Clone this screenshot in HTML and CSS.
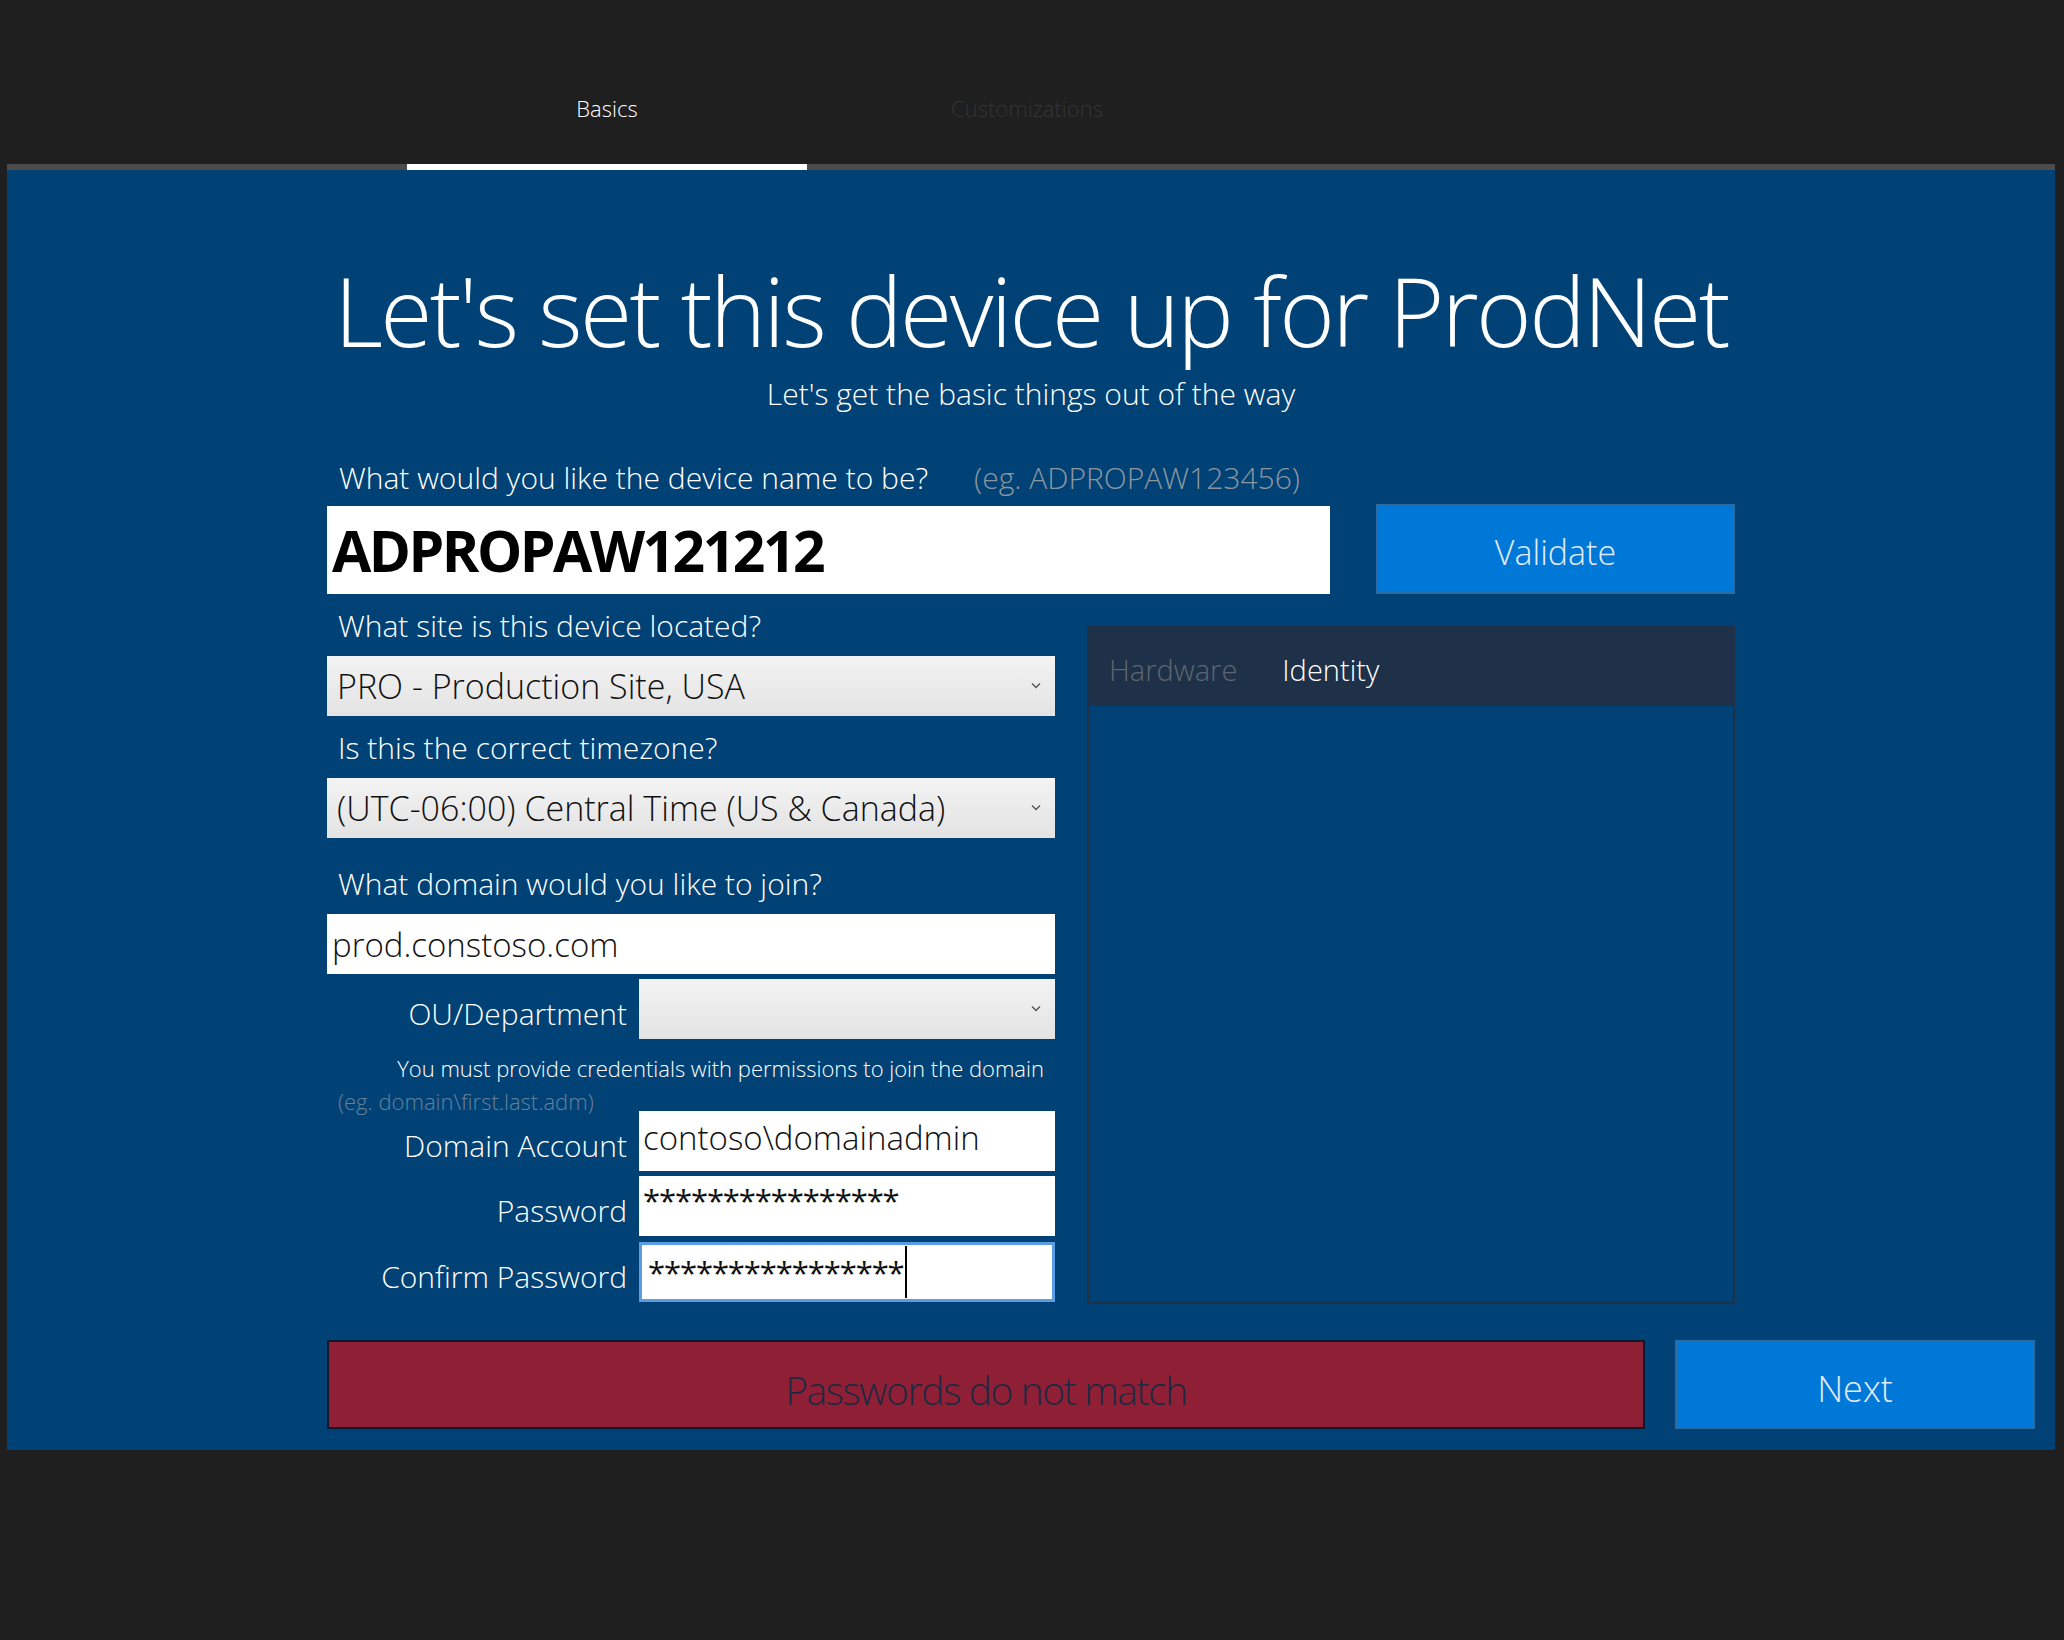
FILE: index.html
```html
<!DOCTYPE html>
<html lang="en">
<head>
    <meta charset="UTF-8">
    <title>Device Setup - ProdNet</title>
    <link rel="stylesheet" href="styles.css">
</head>
<body>

    <div class="tabs">
        <div class="tab active">Basics</div>
        <div class="tab">Customizations</div>
    </div>
    <div class="progress"><div class="progress-fill"></div></div>

    <main class="setup">
        <h1>Let's set this device up for ProdNet</h1>
        <p class="subtitle">Let's get the basic things out of the way</p>

        <div class="form">
            <div class="name-label">What would you like the device name to be?<span class="hint">(eg. ADPROPAW123456)</span></div>
            <div class="name-row">
                <input class="name-input" type="text" value="ADPROPAW121212">
                <button class="btn validate">Validate</button>
            </div>

            <div class="columns">
                <div class="left">
                    <label class="q">What site is this device located?</label>
                    <div class="select">
                        <select><option>PRO - Production Site, USA</option></select>
                        <svg class="chevron" viewBox="0 0 10 7"><path d="M1 1.5 L5 5.5 L9 1.5" fill="none" stroke="#555" stroke-width="1.4"/></svg>
                    </div>

                    <label class="q">Is this the correct timezone?</label>
                    <div class="select">
                        <select><option>(UTC-06:00) Central Time (US &amp; Canada)</option></select>
                        <svg class="chevron" viewBox="0 0 10 7"><path d="M1 1.5 L5 5.5 L9 1.5" fill="none" stroke="#555" stroke-width="1.4"/></svg>
                    </div>

                    <label class="q spaced">What domain would you like to join?</label>
                    <input class="text-box" type="text" value="prod.constoso.com">

                    <div class="row ou">
                        <label>OU/Department</label>
                        <div class="select">
                            <select><option></option></select>
                            <svg class="chevron" viewBox="0 0 10 7"><path d="M1 1.5 L5 5.5 L9 1.5" fill="none" stroke="#555" stroke-width="1.4"/></svg>
                        </div>
                    </div>

                    <p class="note">You must provide credentials with permissions to join the domain</p>
                    <p class="eg">(eg. domain\first.last.adm)</p>

                    <div class="row first">
                        <label>Domain Account</label>
                        <input class="box" type="text" value="contoso\domainadmin">
                    </div>
                    <div class="row">
                        <label>Password</label>
                        <input class="box pw" type="text" value="****************">
                    </div>
                    <div class="row confirm">
                        <label>Confirm Password</label>
                        <div class="box focused"><span class="pw">****************</span><span class="caret"></span></div>
                    </div>
                </div>

                <div class="panel">
                    <div class="panel-tabs">
                        <span class="ptab">Hardware</span>
                        <span class="ptab active">Identity</span>
                    </div>
                    <div class="panel-body"></div>
                </div>
            </div>
        </div>

        <div class="footer">
            <div class="error">Passwords do not match</div>
            <button class="btn next">Next</button>
        </div>
    </main>

</body>
</html>
```

FILE: styles.css
```css
body {
    margin: 0;
    background-color: #1f1f1f;
    color: white;
    font-family: "Open Sans", "Noto Sans", sans-serif;
}

.tabs {
    display: flex;
    height: 164px;
    padding-left: 407px;
    box-sizing: border-box;
}

.tab {
    width: 400px;
    padding-top: 92px;
    text-align: center;
    font-size: 22px;
    line-height: 32px;
    font-weight: 300;
    color: #343434;
}

.tab + .tab {
    width: 440px;
}

.tab.active {
    color: white;
}

.progress {
    height: 6px;
    margin: 0 9px 0 7px;
    background-color: #4c4c4c;
}

.progress-fill {
    width: 400px;
    height: 100%;
    margin-left: 400px;
    background-color: white;
}

.setup {
    height: 1280px;
    margin: 0 9px 0 7px;
    padding-top: 82px;
    box-sizing: border-box;
    background-color: #004275;
}

h1 {
    margin: 0;
    text-align: center;
    font-size: 95px;
    line-height: 116px;
    font-weight: 300;
    letter-spacing: -2.6px;
}

.subtitle {
    margin: 8px 0 0;
    text-align: center;
    font-size: 30px;
    line-height: 36px;
    font-weight: 300;
}

.form {
    width: 1408px;
    margin: 48px 0 0 320px;
}

.name-label {
    padding-left: 12px;
    font-size: 30px;
    line-height: 36px;
    font-weight: 300;
}

.hint {
    margin-left: 46px;
    color: #8c96a0;
}

.name-row {
    display: flex;
    align-items: flex-end;
    justify-content: space-between;
    margin-top: 8px;
}

.name-input {
    width: 1003px;
    height: 88px;
    padding: 0 0 0 5px;
    box-sizing: border-box;
    border: none;
    outline: none;
    background: white;
    color: black;
    font-family: inherit;
    font-size: 57px;
    font-weight: 700;
    letter-spacing: -2.5px;
}

.btn {
    border: 2px solid #2e6aa0;
    background-color: #0078d7;
    color: #e2ebf4;
    font-family: inherit;
    font-weight: 300;
    cursor: pointer;
}

.validate {
    width: 359px;
    height: 90px;
    padding-top: 6px;
    font-size: 34px;
}

.columns {
    display: flex;
    gap: 32px;
    margin-top: 14px;
}

.left {
    width: 728px;
}

.q {
    display: block;
    margin-top: 14px;
    padding-left: 11px;
    font-size: 30px;
    line-height: 36px;
    font-weight: 300;
}

.q:first-child {
    margin-top: 0;
}

.q.spaced {
    margin-top: 28px;
}

.select {
    position: relative;
    height: 60px;
    margin-top: 12px;
}

.select select {
    width: 100%;
    height: 100%;
    padding: 0 0 0 10px;
    border: none;
    border-radius: 0;
    outline: none;
    appearance: none;
    background: linear-gradient(#f3f3f3, #e3e3e3);
    color: #111;
    font-family: inherit;
    font-size: 34px;
    font-weight: 300;
}

.chevron {
    position: absolute;
    right: 14px;
    top: 26px;
    width: 10px;
    height: 7px;
    pointer-events: none;
}

.text-box {
    display: block;
    width: 100%;
    height: 60px;
    margin-top: 12px;
    padding: 0 0 0 5px;
    box-sizing: border-box;
    border: none;
    outline: none;
    background: white;
    color: #111;
    font-family: inherit;
    font-size: 33px;
    font-weight: 300;
}

.row {
    display: flex;
    align-items: center;
    gap: 12px;
    height: 60px;
    margin-top: 5px;
}

.row.first {
    margin-top: 0;
}

.row.confirm {
    margin-top: 6px;
}

.row label {
    width: 300px;
    flex-shrink: 0;
    padding-top: 8px;
    text-align: right;
    font-size: 30px;
    font-weight: 300;
}

.row .select {
    flex: 1;
    margin-top: 0;
}

.box {
    flex: 1;
    width: 0;
    min-width: 0;
    height: 60px;
    padding: 0 0 8px 4px;
    box-sizing: border-box;
    border: none;
    outline: none;
    background: white;
    color: #111;
    font-family: inherit;
    font-size: 33px;
    font-weight: 300;
}

.box.pw,
.box .pw {
    font-size: 31px;
    font-weight: 400;
    letter-spacing: -1.1px;
}

.box.pw {
    padding-bottom: 13px;
}

.box.focused {
    display: flex;
    align-items: center;
    padding: 0 0 0 6px;
    border: 3px solid #5a9de3;
}

.caret {
    width: 2px;
    height: 52px;
    margin-left: 1px;
    background: black;
}

.note {
    margin: 15px 0 0;
    padding-right: 11px;
    text-align: right;
    font-size: 22px;
    line-height: 28px;
    font-weight: 300;
}

.eg {
    margin: 9px 0 0;
    padding-left: 11px;
    font-size: 22px;
    line-height: 20px;
    font-weight: 300;
    color: #66809c;
}

.panel {
    display: flex;
    flex-direction: column;
    width: 648px;
    height: 678px;
    margin-top: 18px;
}

.panel-tabs {
    display: flex;
    align-items: center;
    gap: 45px;
    height: 80px;
    padding: 6px 0 0 22px;
    box-sizing: border-box;
    background-color: #1e3148;
    font-size: 29px;
    font-weight: 300;
}

.ptab {
    color: #5d6670;
}

.ptab.active {
    color: white;
}

.panel-body {
    flex: 1;
    border: 2px solid #1e3148;
    border-top: none;
}

.footer {
    display: flex;
    gap: 30px;
    margin: 36px 0 0 320px;
}

.error {
    display: flex;
    align-items: center;
    justify-content: center;
    width: 1318px;
    height: 89px;
    padding-top: 10px;
    box-sizing: border-box;
    border: 2px solid #0c1a30;
    background-color: #8f1f35;
    color: #1c2942;
    font-size: 39px;
    font-weight: 300;
    letter-spacing: -1.4px;
}

.next {
    width: 360px;
    height: 89px;
    padding-top: 8px;
    font-size: 36px;
}
```
